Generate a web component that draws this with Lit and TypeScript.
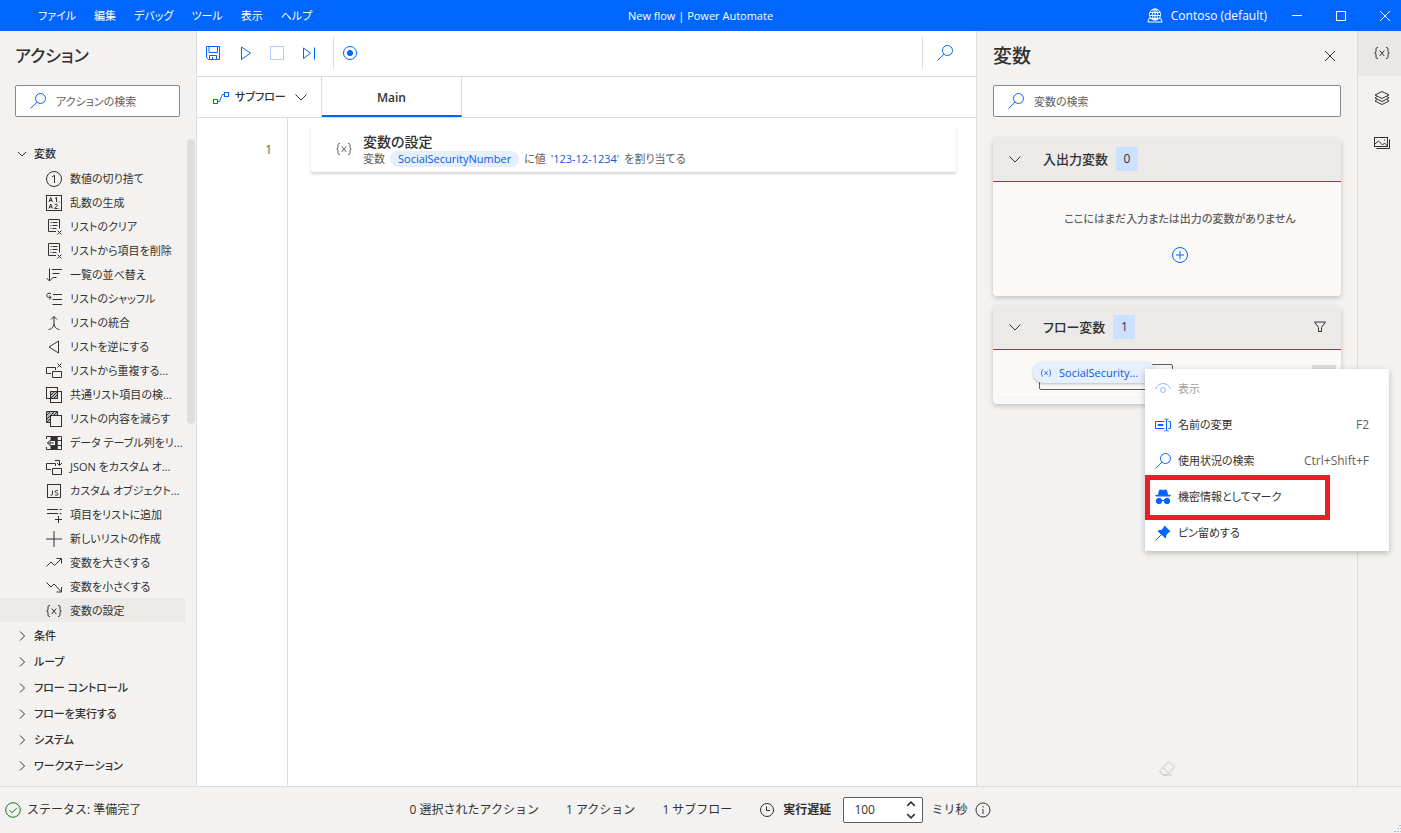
import { LitElement, html, css, svg, nothing, TemplateResult, SVGTemplateResult } from "lit";
import { customElement, state } from "lit/decorators.js";
import { classMap } from "lit/directives/class-map.js";

const glyphs: Record<string, SVGTemplateResult> = {
  globe: svg`<circle cx="8" cy="6.5" r="5.6"/><ellipse cx="8" cy="6.5" rx="2.6" ry="5.6"/><path d="M3 4.5h10M2.4 7.5h11.2M8 1v11M3.2 10.5h9.6M2.5 9.5L.9 14h14.2L13.5 9.5"/>`,
  minimize: svg`<path d="M3 7.5h10"/>`,
  maximize: svg`<rect x="3.5" y="3.5" width="9" height="9"/>`,
  close: svg`<path d="M3 3l10 10M13 3L3 13"/>`,
  save: svg`<path d="M1.5 1.5h13v13h-11l-2-2zM4 1.5v6h8.500v-6M4.500 14.500v-4h7v4M7.500 12v2.500"/>`,
  play: svg`<path d="M4.500 2v12.500L13.500 8.200z"/>`,
  stop: svg`<rect x="1.500" y="1.500" width="13" height="13"/>`,
  step: svg`<path d="M2.500 3v10.500L9.500 8.200zM13.500 2.500v12"/>`,
  record: svg`<circle cx="8" cy="8" r="6.500"/><circle cx="8" cy="8" r="2.600" class="solid"/>`,
  search: svg`<circle cx="10.500" cy="5.500" r="5"/><path d="M7 9.200L.5 15.500"/>`,
  subflow: svg`<rect x=".5" y="10.500" width="4" height="4"/><rect x="11.500" y="3.500" width="4" height="4"/><path d="M5 12.500h1.500L9.500 5.500h2"/>`,
  down: svg`<path d="M2.500 5.500L8 11l5.500-5.500"/>`,
  right: svg`<path d="M6 3.500L10.500 8 6 12.500"/>`,
  smallDown: svg`<path d="M4 6l4 4 4-4"/>`,
  round: svg`<circle cx="8" cy="8" r="7.500"/><path d="M6 6l2.500-1.700V12"/>`,
  random: svg`<rect x=".5" y=".5" width="15" height="15"/><path d="M3 7l1.700-4.500L6.500 7M3.500 5.500h2.400M9 3.500l1.500-1V7M13 6.500v1M3 13.500L4.700 9l1.800 4.500M3.500 12h2.400M8.700 10c.4-1.200 2.800-1.200 2.800.2 0 1-2.800 2-2.800 3.300h3M13 13v.6"/>`,
  listClear: svg`<path d="M10 12.500H2.500v-12h11v9M4.500 3.500h1M6.500 3.500h5M4.500 6.500h1M6.500 6.500h5M4.500 9.500h1M6.500 9.500h4M11.500 11.500l4 4M15.500 11.500l-4 4"/>`,
  sort: svg`<path d="M3.500 1.500V14M.5 11l3 3 3-3M6 2.500h10M6.500 6.500h7M6.500 10.500h4"/>`,
  shuffle: svg`<path d="M7 3.500h9M6.500 8.500h9.500M6.500 13.500h9.500M5 2.500C2 1.500.5 3 .8 4.800 1 6.500 3 6.500 5 6.500M3 4.500l2.200 2L3 8.500"/>`,
  merge: svg`<path d="M8 1.500v7C8 12 5 14.500 2.500 14.500M8 8.500c0 3.500 3 6 5.500 6M5 4.500l3-3 3 3"/>`,
  reverse: svg`<path d="M12.500 2v12L3 8z"/>`,
  dedupe: svg`<path d="M5 10.500H.5v-6h9V7M6.500 8.500h9v6h-9zM11.500.5l4 4M15.500.5l-4 4"/>`,
  common: svg`<rect x=".5" y=".5" width="11" height="11"/><rect x="4.500" y="4.500" width="11" height="11"/><rect x="5" y="5" width="6" height="6" class="hatch"/><path d="M5 8l3-3M5 11l6-6M8 11l3-3"/>`,
  subtract: svg`<path class="hatch" d="M.5 11.500V.5h11v4h-7v7z"/><path d="M.5 11.500V.5h11v4h-7v7zM1 4l3-3M1 8l7-7M1 11l10-10"/><rect x="4.500" y="4.500" width="11" height="11" class="paper"/>`,
  column: svg`<path class="solid" d="M5 1.500h6v13H5z"/><path d="M.5 4V1.500h15v13H.5V12M11 5.500h4.500M11 10.500h4.500M11 1.500v13"/><path class="light" d="M9 8H5"/><path d="M4.500 5L1.500 8l3 3M1.500 8H8"/>`,
  json: svg`<path d="M5 10.500H.5v-6h9V7M6.500 9.500h9v6h-9zM9 1.500h4.500V6M11 4l2.500 2.500L16 4"/>`,
  js: svg`<rect x="1.500" y="1.500" width="13" height="13"/><path d="M6.500 7.500V11c0 1.500-1.500 1.500-2 1M12 8c-.8-.8-3-.7-3 .6 0 1.600 3 .8 3 2.500 0 1.500-2.300 1.500-3.200.6"/>`,
  append: svg`<path d="M1 2.500h11M13.500 2.500h2M1 6.500h11M13.500 6.500h2M12.500 9v7M9 12.500h7"/>`,
  plus: svg`<path d="M8 0v16M0 8h16"/>`,
  increase: svg`<path d="M.5 11.500L5 7l3.500 3.500L15 4M10.500 3.500h5v5"/>`,
  decrease: svg`<path d="M.5 3.500L5 8l3-3 7 7.500M15.500 8v5h-5"/>`,
  variable: svg`<path d="M4 2.500c-2 0-2 .7-2 2.500S2 8 .7 8C2 8 2 9.200 2 11s0 2.500 2 2.500M12 2.500c2 0 2 .7 2 2.500s0 3 1.300 3C14 8 14 9.200 14 11s0 2.500-2 2.500M5.700 5.500l4.600 5.500M10.300 5.500L5.700 11"/>`,
  parenVar: svg`<path d="M3.500 3C1.500 6 1.500 10 3.500 13M12.500 3c2 3 2 7 0 10M5.700 5.500l4.600 5M10.300 5.500l-4.600 5"/>`,
  layers: svg`<path d="M8 1.500L15 5 8 8.500 1 5zM3 6.500L1 8l7 3.500L15 8l-2-1.500M3 9.500L1 11l7 3.500 7-3.500-2-1.500"/>`,
  images: svg`<rect x=".5" y="2.500" width="13" height="9"/><path d="M2.500 13.500h13v-9M1 9l3.500-3 4 4 2-2 3 3M10.500 4.500v1"/>`,
  add: svg`<circle cx="8" cy="8" r="7.500"/><path d="M8 4v8M4 8h8"/>`,
  filter: svg`<path d="M2.500 3h11L9.500 8.500v4h-3v-4z"/>`,
  eye: svg`<path d="M.5 8C2 4.500 5 2.500 8 2.500S14 4.500 15.500 8"/><circle cx="8" cy="9" r="2.500"/>`,
  rename: svg`<path d="M9.500 4.500h-9v7h9M13.500 4.500h2v7h-2M11.500 3v10M9.500 2c1 0 2 .3 2 1 0-.7 1-1 2-1M9.500 14c1 0 2-.3 2-1 0 .7 1 1 2 1"/><path class="solid" d="M3 7.500h5v1H3z"/>`,
  incognito: svg`<path class="solid" d="M3.500 5.500L4.500 1.200C5.500.5 6.500 1.500 8 1.500S10.500.5 11.500 1.200l1 4.300zM.8 6.300h14.400v.7H.8z"/><circle class="solid" cx="4" cy="12" r="2.700"/><circle class="solid" cx="12" cy="12" r="2.700"/><path d="M6 11.500h4"/>`,
  pin: svg`<path class="solid" d="M9.500 1l5.500 5.500-1.500.7L11 9.500l-.5 3.500L3 6l3.500-.7L9 2.500z"/><path d="M6 10L.5 15.500"/>`,
  eraser: svg`<path d="M10 1.500L15.500 7l-7.500 8H4l-3-3v-1.500zM4 7.500l5.500 6M4 15h9"/>`,
  check: svg`<circle cx="8" cy="8" r="7.300"/><path d="M4.500 8.300L7 10.800l5-5"/>`,
  clock: svg`<circle cx="8" cy="8" r="6.500"/><path d="M7.500 4.500V8.500H11"/>`,
  info: svg`<circle cx="8" cy="8" r="7"/><path d="M8 7v5M8 4v1.500"/>`,
  spinUp: svg`<path d="M3 10.500l5-5 5 5"/>`,
  spinDown: svg`<path d="M3 5.500l5 5 5-5"/>`,
};

const icon = (name: string, size = 16): TemplateResult => html`
  <svg class="icon" width=${size} height=${size} viewBox="0 0 16 16" aria-hidden="true">${glyphs[name]}</svg>`;

const MENUS = ["ファイル", "編集", "デバッグ", "ツール", "表示", "ヘルプ"];

const VARIABLE_ACTIONS: [string, string][] = [
  ["round", "数値の切り捨て"],
  ["random", "乱数の生成"],
  ["listClear", "リストのクリア"],
  ["listClear", "リストから項目を削除"],
  ["sort", "一覧の並べ替え"],
  ["shuffle", "リストのシャッフル"],
  ["merge", "リストの統合"],
  ["reverse", "リストを逆にする"],
  ["dedupe", "リストから重複する..."],
  ["common", "共通リスト項目の検..."],
  ["subtract", "リストの内容を減らす"],
  ["column", "データ テーブル列をリ..."],
  ["json", "JSON をカスタム オ..."],
  ["js", "カスタム オブジェクト..."],
  ["append", "項目をリストに追加"],
  ["plus", "新しいリストの作成"],
  ["increase", "変数を大きくする"],
  ["decrease", "変数を小さくする"],
  ["variable", "変数の設定"],
];

const GROUPS = ["条件", "ループ", "フロー コントロール", "フローを実行する", "システム", "ワークステーション"];

interface ContextItem {
  icon: string;
  label: string;
  keys?: string;
  disabled?: boolean;
  marked?: boolean;
}

const CONTEXT: ContextItem[] = [
  { icon: "eye", label: "表示", disabled: true },
  { icon: "rename", label: "名前の変更", keys: "F2" },
  { icon: "search", label: "使用状況の検索", keys: "Ctrl+Shift+F" },
  { icon: "incognito", label: "機密情報としてマーク", marked: true },
  { icon: "pin", label: "ピン留めする" },
];

@customElement("app-root")
export class AppRoot extends LitElement {
  @state() private selected = "変数の設定";
  @state() private delay = 100;

  static styles = css`
    :host {
      --blue: #0066ff;
      --ink: #323130;
      --soft: #605e5c;
      --line: #dddcdb;
      --pane: #f3f2f1;
      display: flex;
      flex-direction: column;
      height: 100vh;
      overflow: hidden;
      background: var(--pane);
      color: var(--ink);
      font: 11px/16px "Open Sans", "Noto Sans CJK JP", sans-serif;
      font-feature-settings: "palt";
      white-space: nowrap;
    }
    * { box-sizing: border-box; }
    button, input {
      font: inherit;
      font-feature-settings: inherit;
      color: inherit;
      margin: 0;
      padding: 0;
      border: 0;
      background: none;
    }
    input { min-width: 0; outline: none; }
    ul { list-style: none; margin: 0; padding: 0; }
    h1, h2, h3, p { margin: 0; }
    .icon {
      display: block;
      flex: none;
      fill: none;
      stroke: currentColor;
      stroke-width: 1;
    }
    .icon .solid { fill: currentColor; }
    .icon .hatch { fill: #bbb; stroke: none; }
    .icon .paper { fill: var(--pane); }
    .icon .light { stroke: #fff; stroke-width: 4; }

    .titlebar {
      display: grid;
      grid-template-columns: 1fr auto 1fr;
      align-items: center;
      flex: none;
      height: 31px;
      background: var(--blue);
      color: #fff;
    }
    .menus { display: flex; gap: 18px; padding-left: 38px; }
    .window { display: flex; align-items: center; justify-content: flex-end; gap: 28px; padding-right: 8px; }
    .tenant { display: flex; align-items: center; gap: 8px; margin-right: -6px; font-size: 12px; }

    .body { display: flex; flex: 1; min-height: 0; }

    .actions {
      display: flex;
      flex-direction: column;
      flex: none;
      width: 197px;
      border-right: 1px solid var(--line);
    }
    .heading { font-size: 19px; line-height: 26px; font-weight: 500; }
    .actions .heading { padding: 12px 15px 16px; font-size: 17px; }
    .search {
      display: flex;
      align-items: center;
      gap: 10px;
      height: 32px;
      padding: 0 14px;
      border: 1px solid #8a8886;
      border-radius: 2px;
      background: #fff;
      color: var(--blue);
    }
    .search input { flex: 1; height: 20px; color: var(--ink); }
    .search input::placeholder { color: var(--soft); opacity: 1; }
    .actions .search { margin: 0 16px 22px 15px; }
    .scroller { display: flex; flex: 1; min-height: 0; gap: 2px; }
    .tree { flex: 1; min-width: 0; padding-top: 1px; }
    .thumb { flex: none; width: 8px; height: 44%; margin-right: 1px; border-radius: 4px; background: #dfdedd; }
    .group {
      display: flex;
      align-items: center;
      gap: 4px;
      width: 100%;
      height: 26px;
      padding: 2px 0 0 14px;
      font-weight: 500;
    }
    .action {
      display: flex;
      align-items: center;
      gap: 8px;
      width: 100%;
      height: 24px;
      padding: 1px 0 0 46px;
    }
    .action.on { background: #ebeae9; }

    .designer {
      display: flex;
      flex-direction: column;
      flex: 1;
      min-width: 0;
      background: #fff;
      border-right: 1px solid var(--line);
    }
    .toolbar {
      display: flex;
      align-items: center;
      flex: none;
      height: 46px;
      padding: 0 15px 1px 0;
      border-bottom: 1px solid var(--line);
      color: var(--blue);
    }
    .toolbar button { display: grid; place-items: center; width: 32px; height: 32px; }
    .toolbar button:disabled { opacity: 0.3; }
    .rule { width: 1px; height: 32px; margin-left: 8px; background: var(--line); }
    .rule.end { margin: 0 6px 0 auto; }
    .tabs {
      display: flex;
      flex: none;
      height: 41px;
      border-bottom: 1px solid var(--line);
      font-weight: 500;
    }
    .subflows {
      display: flex;
      align-items: center;
      gap: 6px;
      width: 125px;
      padding: 0 12px 0 16px;
      border-right: 1px solid var(--line);
    }
    .subflows .icon:first-child { color: var(--blue); }
    .subflows span { flex: 1; text-align: left; }
    .tab {
      width: 140px;
      padding-top: 3px;
      border-right: 1px solid var(--line);
      border-bottom: 2px solid var(--blue);
      font-size: 12px;
      font-weight: 600;
    }
    .canvas { display: flex; flex: 1; min-height: 0; }
    .gutter {
      flex: none;
      width: 91px;
      padding: 24px 15px 0;
      border-right: 1px solid var(--line);
      text-align: right;
      font-size: 12px;
      color: var(--soft);
    }
    .steps { flex: 1; min-width: 0; padding: 8px 20px 0 23px; }
    .step {
      display: flex;
      align-items: center;
      gap: 11px;
      height: 46px;
      padding-left: 25px;
      border-radius: 2px;
      box-shadow: 0 2px 3px rgba(0, 0, 0, 0.16);
      color: var(--soft);
    }
    .step div { padding-top: 2px; }
    .step h3 { font-size: 14px; line-height: 18px; font-weight: 500; color: var(--ink); }
    .step p { display: flex; align-items: center; gap: 5px; }
    .token { padding: 0 8px; border-radius: 8px; background: #e5effe; color: #0a5ae0; }
    .literal { color: #0a5ae0; }

    .variables {
      display: flex;
      flex-direction: column;
      flex: none;
      width: 381px;
      padding: 12px 16px 10px;
      border-right: 1px solid var(--line);
    }
    .panehead { display: flex; align-items: center; justify-content: space-between; padding-right: 3px; margin-bottom: 16px; }
    .variables .search { margin-bottom: 21px; }
    .card {
      position: relative;
      margin-bottom: 10px;
      border-radius: 4px;
      background: #faf9f8;
      box-shadow: 0 2px 5px rgba(0, 0, 0, 0.2);
    }
    .cardhead {
      display: flex;
      align-items: center;
      gap: 8px;
      height: 44px;
      padding: 0 13px 2px 14px;
      border-bottom: 1px solid #1160d8;
      border-radius: 4px 4px 0 0;
      background: #ebeae9;
      color: var(--ink);
    }
    .cardhead h2 { margin-left: 12px; font-size: 13px; line-height: 20px; font-weight: 500; }
    .count { min-width: 22px; padding: 4px 7px; background: #cce0ff; text-align: center; font-size: 12px; }
    .cardhead .filter { margin-left: auto; }
    .empty {
      display: flex;
      flex-direction: column;
      align-items: center;
      gap: 20px;
      height: 114px;
      padding: 29px 0 0 26px;
      font-weight: 500;
      color: var(--soft);
    }
    .empty button { color: var(--blue); }
    .varrow {
      display: flex;
      align-items: flex-start;
      height: 48px;
      margin: 0 4px;
      padding: 14px 0 0 42px;
      border-bottom: 1px solid #f3f2f1;
    }
    .varrow .value {
      width: 134px;
      height: 26px;
      border: 1px solid var(--soft);
      border-radius: 2px;
      padding: 0 4px;
    }
    .varrow .more { width: 24px; height: 22px; margin: 1px 1px 0 auto; background: #dfdedd; }
    .flow { padding-bottom: 6px; }
    .chip {
      position: absolute;
      top: 56px;
      left: 40px;
      display: flex;
      align-items: center;
      gap: 7px;
      height: 21px;
      width: 123px;
      padding: 0 7px;
      border-radius: 11px;
      background: #e5effe;
      box-shadow: 0 1px 3px rgba(0, 0, 0, 0.26);
      color: #0a5ae0;
    }
    .context {
      position: absolute;
      z-index: 2;
      top: 63px;
      left: 152px;
      width: 244px;
      padding: 1px 0;
      background: #fff;
      box-shadow: 0 2px 6px rgba(0, 0, 0, 0.24);
    }
    .context li { position: relative; }
    .context button {
      display: flex;
      align-items: center;
      gap: 7px;
      width: 100%;
      height: 36px;
      padding: 1px 20px 0 10px;
    }
    .context .icon { color: var(--blue); }
    .context kbd { margin-left: auto; font: inherit; font-size: 12px; color: var(--soft); }
    .context button:disabled { color: #a19f9d; }
    .context button:disabled .icon { opacity: 0.45; }
    .outline {
      position: absolute;
      inset: -3px 59px -6px 0;
      border: 5px solid #ee1c25;
      pointer-events: none;
    }
    .erase { margin-top: auto; align-self: center; color: #c8c6c4; }

    .rail { flex: 1 0 43px; max-width: 43px; }
    .rail button { display: grid; place-items: center; width: 100%; height: 45px; padding: 0 0 1px 5px; }
    .rail button.on { background: #e9e8e7; }

    .status {
      display: grid;
      grid-template-columns: 1fr auto 1fr;
      align-items: center;
      flex: none;
      height: 47px;
      border-top: 1px solid var(--line);
      font-size: 12px;
      font-feature-settings: normal;
    }
    .ready { display: flex; align-items: center; gap: 6px; padding-left: 5px; }
    .ready .icon { color: #107c10; }
    .facts { display: flex; align-items: center; gap: 27px; }
    .delay { display: flex; align-items: center; gap: 8px; }
    .delay label { font-weight: 600; }
    .spin {
      display: flex;
      align-items: center;
      width: 80px;
      height: 26px;
      margin-left: 4px;
      padding: 0 5px 0 10px;
      border: 1px solid var(--soft);
      border-radius: 2px;
      background: #fff;
    }
    .spin input { flex: 1; appearance: textfield; }
    .spin input::-webkit-inner-spin-button { appearance: none; }
    .spin button { display: block; }
    .spin .icon { stroke-width: 2; }
    .grip { align-self: end; justify-self: end; color: #b4c0d8; }
  `;

  private search(text: string) {
    return html`<label class="search">
      ${icon("search")}
      <input type="text" aria-label=${text} placeholder=${text} />
    </label>`;
  }

  private renderActions() {
    return html`<nav class="actions">
      <h1 class="heading">アクション</h1>
      ${this.search("アクションの検索")}
      <div class="scroller">
        <div class="tree">
          <button class="group">${icon("smallDown")}変数</button>
          <ul>
            ${VARIABLE_ACTIONS.map(
              ([glyph, label]) => html`<li>
                <button
                  class=${classMap({ action: true, on: label === this.selected })}
                  @click=${() => (this.selected = label)}
                >${icon(glyph)}${label}</button>
              </li>`
            )}
          </ul>
          ${GROUPS.map((g) => html`<button class="group">${icon("right")}${g}</button>`)}
        </div>
        <div class="thumb"></div>
      </div>
    </nav>`;
  }

  private renderDesigner() {
    return html`<main class="designer">
      <div class="toolbar">
        <button aria-label="保存">${icon("save")}</button>
        <button aria-label="実行">${icon("play")}</button>
        <button aria-label="停止" disabled>${icon("stop")}</button>
        <button aria-label="次のアクションを実行">${icon("step")}</button>
        <span class="rule"></span>
        <button aria-label="レコーダー">${icon("record")}</button>
        <span class="rule end"></span>
        <button aria-label="検索">${icon("search")}</button>
      </div>
      <div class="tabs">
        <button class="subflows">${icon("subflow")}<span>サブフロー</span>${icon("down")}</button>
        <button class="tab">Main</button>
      </div>
      <div class="canvas">
        <div class="gutter">1</div>
        <div class="steps">
          <article class="step">
            ${icon("variable")}
            <div>
              <h3>変数の設定</h3>
              <p>変数 <span class="token">SocialSecurityNumber</span> に値
                <span class="literal">'123-12-1234'</span> を割り当てる</p>
            </div>
          </article>
        </div>
      </div>
    </main>`;
  }

  private renderContext() {
    return html`<ul class="context">
      ${CONTEXT.map(
        (item) => html`<li>
          <button ?disabled=${item.disabled}>
            ${icon(item.icon)}${item.label}${item.keys ? html`<kbd>${item.keys}</kbd>` : nothing}
          </button>
          ${item.marked ? html`<span class="outline"></span>` : nothing}
        </li>`
      )}
    </ul>`;
  }

  private renderVariables() {
    return html`<aside class="variables">
      <div class="panehead">
        <h1 class="heading">変数</h1>
        <button aria-label="閉じる">${icon("close")}</button>
      </div>
      ${this.search("変数の検索")}
      <section class="card">
        <div class="cardhead">
          ${icon("down")}
          <h2>入出力変数</h2>
          <span class="count">0</span>
        </div>
        <div class="empty">
          <p>ここにはまだ入力または出力の変数がありません</p>
          <button aria-label="追加">${icon("add")}</button>
        </div>
      </section>
      <section class="card flow">
        <div class="cardhead">
          ${icon("down")}
          <h2>フロー変数</h2>
          <span class="count">1</span>
          <button class="filter" aria-label="フィルター">${icon("filter")}</button>
        </div>
        <div class="varrow">
          <input class="value" aria-label="値" readonly />
          <button class="more" aria-label="その他"></button>
        </div>
        <span class="chip">${icon("parenVar", 12)}SocialSecurity...</span>
        ${this.renderContext()}
      </section>
      <button class="erase" aria-label="値のクリア" disabled>${icon("eraser")}</button>
    </aside>`;
  }

  private renderStatus() {
    return html`<footer class="status">
      <div class="ready">${icon("check")}ステータス: 準備完了</div>
      <div class="facts">
        <span>0 選択されたアクション</span>
        <span>1 アクション</span>
        <span>1 サブフロー</span>
        <div class="delay">
          ${icon("clock")}
          <label for="delay">実行遅延</label>
          <div class="spin">
            <input id="delay" type="number" .value=${String(this.delay)} />
            <div>
              <button aria-label="増やす" @click=${() => this.delay++}>${icon("spinUp", 12)}</button>
              <button aria-label="減らす" @click=${() => this.delay--}>${icon("spinDown", 12)}</button>
            </div>
          </div>
          <span>ミリ秒</span>
          ${icon("info")}
        </div>
      </div>
      <svg class="icon grip" width="8" height="10" viewBox="0 0 8 10" aria-hidden="true">
        <path stroke-dasharray="2 1" d="M6 2.500h2M4 5.500h4M1 8.500h7" />
      </svg>
    </footer>`;
  }

  render() {
    return html`
      <header class="titlebar">
        <nav class="menus">${MENUS.map((m) => html`<button>${m}</button>`)}</nav>
        <span>New flow | Power Automate</span>
        <div class="window">
          <span class="tenant">${icon("globe")}Contoso (default)</span>
          <button aria-label="最小化">${icon("minimize")}</button>
          <button aria-label="最大化">${icon("maximize")}</button>
          <button aria-label="閉じる">${icon("close")}</button>
        </div>
      </header>
      <div class="body">
        ${this.renderActions()} ${this.renderDesigner()} ${this.renderVariables()}
        <nav class="rail">
          <button class="on" aria-label="変数">${icon("variable")}</button>
          <button aria-label="UI 要素">${icon("layers")}</button>
          <button aria-label="画像">${icon("images")}</button>
        </nav>
      </div>
      ${this.renderStatus()}
    `;
  }
}
